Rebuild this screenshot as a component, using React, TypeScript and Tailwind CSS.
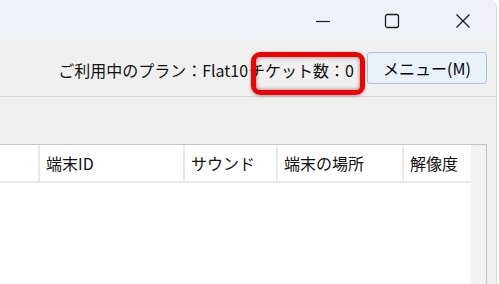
const columns = [
  { label: "", width: "w-[40px]" },
  { label: "端末ID", width: "w-[145px]" },
  { label: "サウンド", width: "w-[93px]" },
  { label: "端末の場所", width: "w-[126px]" },
  { label: "解像度", width: "flex-1" },
];

const App = () => {
  return (
    <div className="w-[499px] h-[284px] bg-white overflow-hidden font-['Noto_Sans_CJK_JP',sans-serif] text-[#111]">
      <div className="relative w-[497px] h-full bg-[#f0f0f0] rounded-tr-[8px] border-r border-[#d6d9dd] flex flex-col">
        {/* title bar */}
        <div className="h-[41px] shrink-0 bg-[#eef2f7] rounded-tr-[8px] flex items-center justify-end pr-[25px]">
          <svg width="16" height="16" viewBox="0 0 16 16" className="mt-[1px]">
            <path d="M1 8.5h14" stroke="#1a1a1a" strokeWidth="1.2" />
          </svg>
          <svg width="16" height="16" viewBox="0 0 16 16" className="ml-[53px]">
            <rect x="1.5" y="1.5" width="13" height="13" rx="2" fill="none" stroke="#1a1a1a" strokeWidth="1.3" />
          </svg>
          <svg width="16" height="16" viewBox="0 0 16 16" className="ml-[55px]">
            <path d="M1.5 1.5l13 13M14.5 1.5l-13 13" stroke="#1a1a1a" strokeWidth="1.3" />
          </svg>
        </div>

        {/* toolbar */}
        <div className="h-[56px] shrink-0 border-b border-[#d8d8d8] flex items-center justify-end pr-[9px]">
          <span className="text-[16px] leading-none mt-[2px]">ご利用中のプラン：Flat10</span>
          <span className="text-[16px] leading-none mt-[2px] ml-[1px]">チケット数：0</span>
          <button className="ml-[13px] w-[120px] h-[32px] mb-[2px] bg-[#e9f1fb] border border-[#a4c2e4] rounded-[3px] text-[16px] leading-none text-black">
            メニュー(M)
          </button>
        </div>

        {/* annotation */}
        <div className="absolute left-[251px] top-[52px] w-[114px] h-[43px] border-[5px] border-[#f00000] rounded-[9px] shadow-[inset_0_0_4px_rgba(0,0,0,0.5),0_1px_3px_rgba(0,0,0,0.35)]" />

        {/* content */}
        <div className="flex-1 pt-[47px] pr-[9px]">
          <div className="h-full border-t border-r border-[#c4c4c4] flex">
            <div className="flex-1 bg-white flex flex-col">
              <div className="h-[38px] flex border-b-2 border-[#e8e8e8]">
                {columns.map((c, i) => (
                  <div
                    key={i}
                    className={`${c.width} flex items-center pl-[6px] text-[16px] leading-none ${
                      i < columns.length - 1 ? "border-r-2 border-[#e8e8e8]" : ""
                    }`}
                  >
                    {c.label}
                  </div>
                ))}
              </div>
            </div>
            <div className="w-[15px] bg-[#f3f3f3]" />
          </div>
        </div>
      </div>
    </div>
  );
};

export default App;
